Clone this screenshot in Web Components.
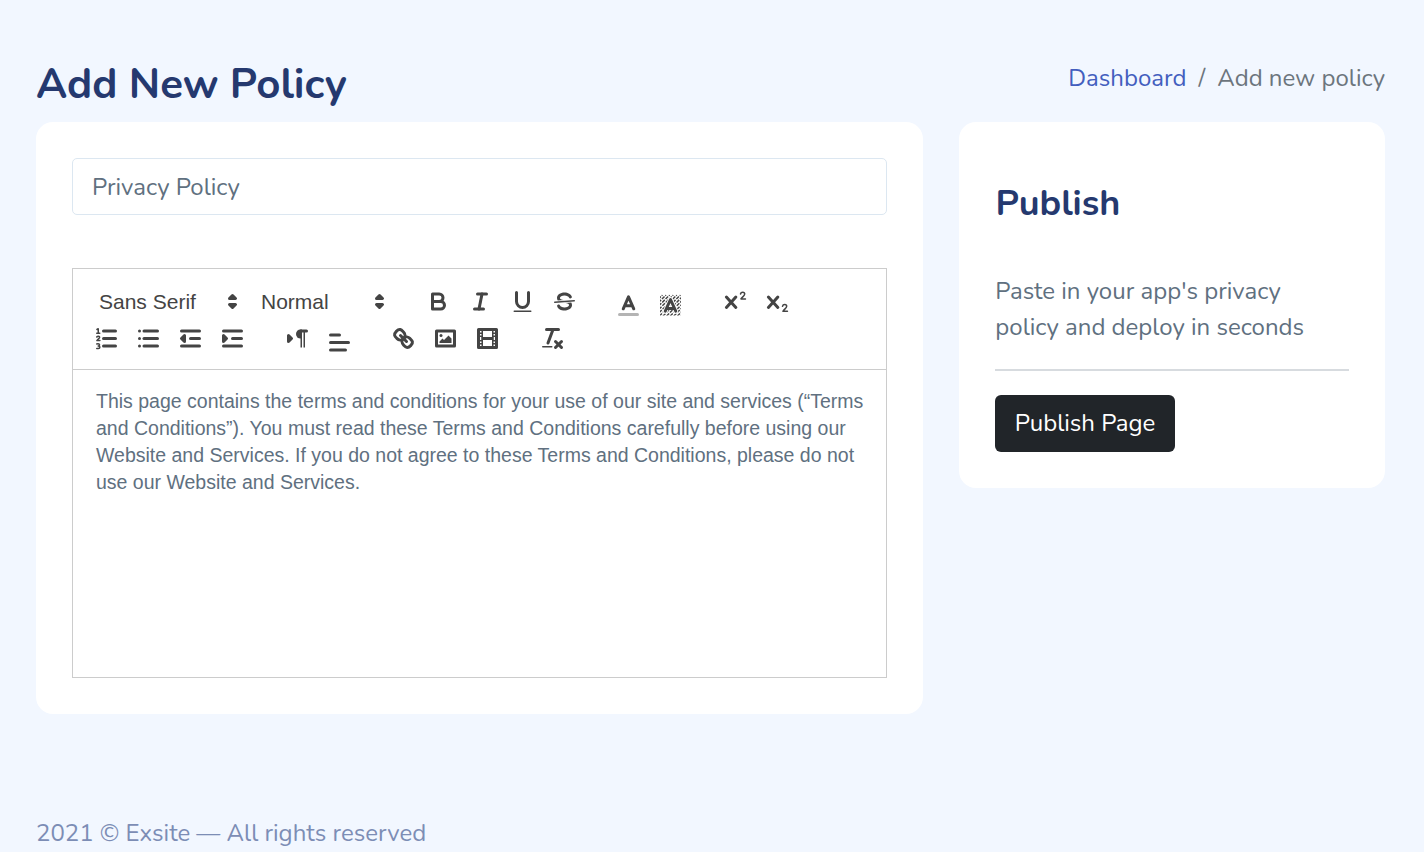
<!DOCTYPE html>
<html lang="en">
<head>
<meta charset="utf-8">
<title>Add New Policy</title>
<style>
html,body{margin:0;background:#f2f7ff;height:852px;overflow:hidden}
body{font-family:Nunito,Lato,sans-serif;font-size:24px;line-height:36px;color:#607080}
</style>
</head>
<body>
<policy-page></policy-page>
<script>
const define = (name, html, setup) => customElements.define(name, class extends HTMLElement {
  connectedCallback() {
    const root = this.attachShadow({ mode: 'open' });
    root.innerHTML = html;
    if (setup) setup(this, root);
  }
});

const L = (x1, y1, x2, y2) => `<path d="M${x1} ${y1}L${x2} ${y2}"/>`;
const F = d => `<path class="f" d="${d}"/>`;
const R = (x, y, w, h) => `<rect class="f" x="${x}" y="${y}" width="${w}" height="${h}"/>`;
const hatch = Array.from({ length: 12 }, (_, i) => `<path d="M${-10.4 + i * 2.4} 16l14 -14"/>`).join('');
const icons = {
  arrows: '<path class="fs" d="M7 11L9 13L11 11Z"/><path class="fs" d="M7 7L9 5L11 7Z"/>',
  bold: '<path d="M5 4H9.5A2.5 2.5 0 0 1 9.5 9H5Z"/><path d="M5 9H10.5A2.5 2.5 0 0 1 10.5 14H5Z"/>',
  italic: L(7,4,13,4) + L(5,14,11,14) + L(8,14,10,4),
  underline: '<path d="M5 3V9a4 4 0 0 0 8 0V3"/><rect class="f" x="3" y="15" width="12" height="1" rx=".5"/>',
  strike: '<path class="t" d="M15.5 8.5L2.5 9.5"/>' + F('M9.007,8C6.542,7.791,6,7.519,6,6.5,6,5.792,7.283,5,9,5c1.571,0,2.765.679,2.969,1.309a1,1,0,0,0,1.9-.617C13.356,4.106,11.354,3,9,3,6.2,3,4,4.538,4,6.5a3.2,3.2,0,0,0,.5,1.843Z') + F('M8.984,10C11.457,10.208,12,10.479,12,11.5c0,.708-1.283,1.5-3,1.5-1.571,0-2.765-.679-2.969-1.309a1,1,0,1,0-1.9.617C4.644,13.894,6.646,15,9,15c2.8,0,5-1.538,5-3.5a3.2,3.2,0,0,0-.5-1.843Z'),
  color: '<path opacity=".4" d="M3 15H15"/><path d="M5.5 11.2L9 3.2L12.5 11.2M11.63 9.2H6.38"/>',
  background: `<clipPath id="c"><rect x="2" y="1.6" width="14" height="14"/></clipPath><g clip-path="url(#c)" class="h">${hatch}</g><path style="stroke:#fff;stroke-width:3.2" d="M5.5 12.8L9 5L12.5 12.8"/><path d="M5.5 12.8L9 5L12.5 12.8M11.63 11H6.38"/>`,
  super: L(3.6,6,9.9,13) + L(9.9,6,3.6,13) + '<path class="t" d="M13 4C13.3 2.4 15.8 2.4 15.8 4C15.8 5.3 14 6 13.3 7.3H16.3"/>',
  sub: L(3.6,6,9.9,13) + L(9.9,6,3.6,13) + '<path class="t" d="M13 12.2C13.3 10.6 15.8 10.6 15.8 12.2C15.8 13.5 14 14.2 13.3 15.5H16.3"/>',
  ordered: L(7,4,15,4) + L(7,9,15,9) + L(7,14,15,14) + '<path class="t" d="M2.5 5.5H4.5M2.6 3L3.5 2.5V5.5M2.5 8C3 7.2 4.5 7.3 4.4 8.2C4.3 9 3.1 9.5 2.6 10.4H4.6M2.5 12.6C4.6 12.2 4.9 13.6 3.5 14C5 14 4.8 15.6 3.6 15.6H2.5"/>',
  bullet: L(6,4,15,4) + L(6,9,15,9) + L(6,14,15,14) + L(3,4,3,4) + L(3,9,3,9) + L(3,14,3,14),
  outdent: L(3,14,15,14) + L(3,4,15,4) + L(9,9,15,9) + '<path class="fs" d="M5 7V11L3 9Z"/>',
  indent: L(3,14,15,14) + L(3,4,15,4) + L(9,9,15,9) + '<path class="fs" d="M3 7V11L5 9Z"/>',
  direction: '<path class="fs" d="M3 11L5 9L3 7Z"/>' + L(15,4,11,4) + F('M11 3a3 3 0 0 0 0 6h1V3Z') + R(11,4,1,11) + R(13,4,1,11),
  align: L(3,9,15,9) + L(3,14,13,14) + L(3,4,9,4),
  link: L(7,7,11,11) + '<path d="M8.9,4.577a3.476,3.476,0,0,1,.36,4.679A3.476,3.476,0,0,1,4.577,8.9C3.185,7.5,2.035,6.4,4.217,4.217S7.5,3.185,8.9,4.577Z"/><path d="M13.423,9.1a3.476,3.476,0,0,0-4.679-.36,3.476,3.476,0,0,0,.36,4.679c1.392,1.392,2.5,2.542,4.679.36S14.815,10.5,13.423,9.1Z"/>',
  image: '<rect x="3" y="4" width="12" height="10"/><circle class="f" cx="6" cy="7" r="1"/>' + F('M5 12V11L7 9L8 10L11 7L13 9V12Z'),
  video: '<rect x="3" y="3" width="12" height="12"/>' + R(5,3,1,12) + R(12,3,1,12) + R(5,8,8,2) + [5,7,10,12].map(y => R(3,y,3,1) + R(12,y,3,1)).join(''),
  clean: L(5,3,13,3) + L(6,12,9.35,3) + L(11,11,15,15) + L(15,11,11,15) + '<rect class="f" x="2" y="14" width="7" height="1" rx=".5"/>'
};

define('tool-icon', `<style>
:host{display:flex;justify-content:center;width:42px;height:27px;flex:none}
:host([drop]){padding-top:4px}
svg{display:block;width:27px;height:27px;fill:none;stroke:#444;stroke-width:2;stroke-linecap:round;stroke-linejoin:round}
.f{fill:#444;stroke:none}.fs{fill:#444}.t{stroke-width:1}
.h path{stroke-width:.95;stroke-dasharray:2.4 .8;stroke-linecap:butt}
</style><svg viewBox="0 0 18 18"></svg>`, (el, root) => {
  root.querySelector('svg').innerHTML = icons[el.getAttribute('name')];
});

define('tool-group', `<style>:host{display:flex;margin-right:22px;height:37px}:host(:nth-child(odd)){margin-right:23px}</style><slot></slot>`);

define('tool-picker', `<style>
:host{display:flex;justify-content:space-between;box-sizing:border-box;padding-left:14px;font:500 21px/27px "Liberation Sans",Arial,sans-serif;color:#444}
tool-icon{width:27px;margin-right:1px}
</style><span><slot></slot></span><tool-icon name="arrows"></tool-icon>`);

define('editor-toolbar', `<style>
:host{display:block;box-sizing:border-box;height:102px;border:1px solid #ccc;padding:19px 0 0 12px}
.row{display:flex}
</style>
<div class="row">
<tool-group><tool-picker style="width:162px">Sans Serif</tool-picker><tool-picker style="width:147px">Normal</tool-picker></tool-group>
<tool-group><tool-icon name="bold"></tool-icon><tool-icon name="italic"></tool-icon><tool-icon name="underline"></tool-icon><tool-icon name="strike"></tool-icon></tool-group>
<tool-group style="margin-right:22px"><tool-icon name="color" drop></tool-icon><tool-icon name="background" drop></tool-icon></tool-group>
<tool-group><tool-icon name="super"></tool-icon><tool-icon name="sub"></tool-icon></tool-group>
</div>
<div class="row">
<tool-group><tool-icon name="ordered"></tool-icon><tool-icon name="bullet"></tool-icon><tool-icon name="outdent"></tool-icon><tool-icon name="indent"></tool-icon></tool-group>
<tool-group><tool-icon name="direction"></tool-icon><tool-icon name="align" drop></tool-icon></tool-group>
<tool-group><tool-icon name="link"></tool-icon><tool-icon name="image"></tool-icon><tool-icon name="video"></tool-icon></tool-group>
<tool-group><tool-icon name="clean"></tool-icon></tool-group>
</div>`);

define('rich-editor', `<style>
:host{display:block;margin-top:53px}
.area{box-sizing:border-box;height:308px;border:1px solid #ccc;border-top:0;padding:18px 22px 0 23px;font:19.5px/27px "Liberation Sans",Arial,sans-serif;white-space:nowrap}
</style><editor-toolbar></editor-toolbar><div class="area"><slot></slot></div>`);

define('text-field', `<style>
:host{display:block;box-sizing:border-box;height:57px;border:1px solid #dce7f1;border-radius:5px;padding:10px 19px}
</style><slot></slot>`);

define('white-card', `<style>:host{display:block;box-sizing:border-box;background:#fff;border-radius:17px;padding:36px}</style><slot></slot>`);

define('page-heading', `<style>
:host{display:flex;justify-content:space-between;height:62px}
h3{margin:0;font-size:42px;line-height:50px;font-weight:700;color:#25396f}
nav{display:flex;gap:12px;color:#6c757d}
a{color:#435ebe}
</style><h3>Add New Policy</h3><nav><a>Dashboard</a><span>/</span><span>Add new policy</span></nav>`);

define('publish-panel', `<style>
:host{display:block}
h4{margin:24px 0 0;padding-left:.5px;font-size:36px;line-height:43px;font-weight:700;color:#25396f}
p{margin:48px 0 0;padding-left:.3px;height:72px;white-space:nowrap}
hr{margin:24px 0;height:2px;border:0;background:#d7dbdf}
button{display:block;box-sizing:border-box;width:180px;height:57px;padding:0 0 2px;border:0;border-radius:6px;background:#212529;color:#fff;font:inherit}
</style><h4>Publish</h4><p>Paste in your app's privacy<br>policy and deploy in seconds</p><hr><button>Publish Page</button>`);

define('page-footer', `<style>:host{display:block;margin-top:101px;color:#7c8db5;white-space:nowrap}</style><span><slot></slot></span>`);

define('policy-page', `<style>
:host{display:block;padding:60px 39px 0 36px}
.cols{display:grid;grid-template-columns:887px 426px;gap:36px;align-items:start}
.main{height:592px}.side{height:366px}
</style>
<page-heading></page-heading>
<div class="cols">
<white-card class="main"><text-field>Privacy Policy</text-field>
<rich-editor>This page contains the terms and conditions for your use of our site and services (“Terms<br>and Conditions”). You must read these Terms and Conditions carefully before using our<br>Website and Services. If you do not agree to these Terms and Conditions, please do not<br>use our Website and Services.</rich-editor></white-card>
<white-card class="side"><publish-panel></publish-panel></white-card>
</div>
<page-footer>2021 © Exsite — All rights reserved</page-footer>`);
</script>
</body>
</html>
